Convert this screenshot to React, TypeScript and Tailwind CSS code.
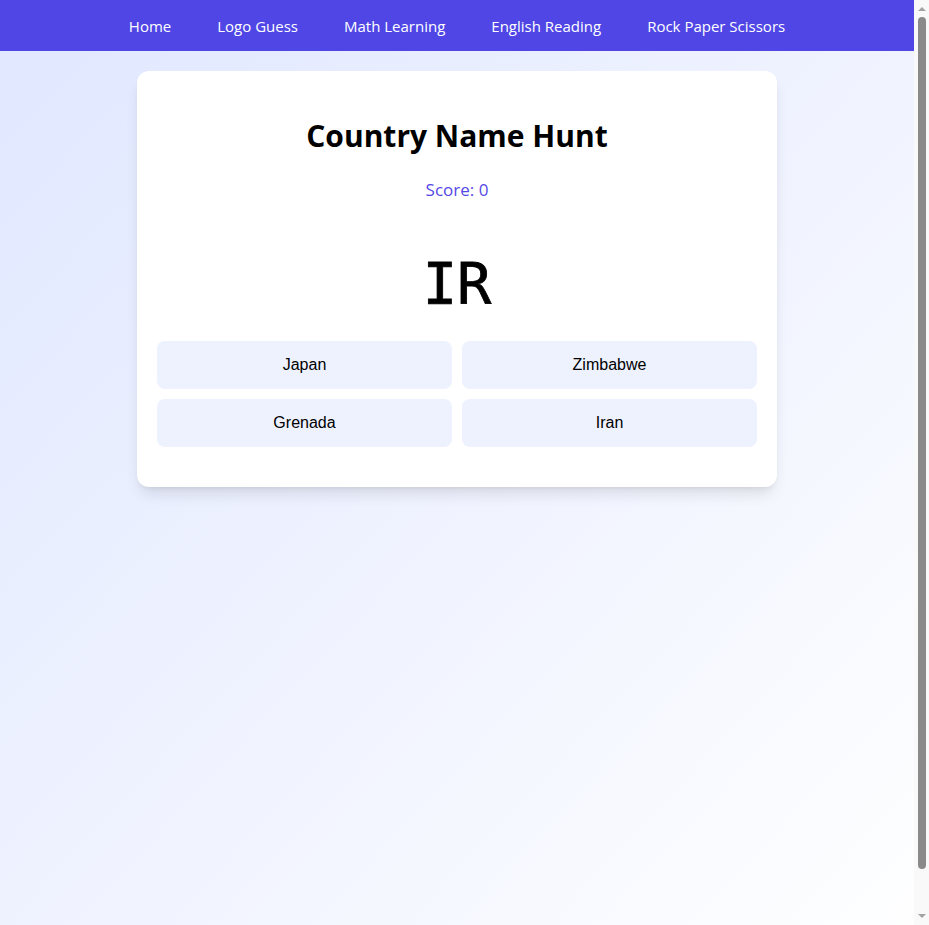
import React from "react";

export default function App() {
  const links = ["Home", "Logo Guess", "Math Learning", "English Reading", "Rock Paper Scissors"];
  const options = ["Japan", "Zimbabwe", "Grenada", "Iran"];
  return (
    <div className="flex h-screen overflow-hidden font-['Open_Sans',sans-serif]">
      <div className="w-[914px] shrink-0 h-[976px] bg-gradient-to-br from-[#e0e7ff] to-[#ffffff]">
        <nav className="h-[51px] bg-[#4f46e5] flex items-center justify-center gap-[46px] pt-[2px]">
          {links.map((l) => (
            <a key={l} href="#" className="text-white text-[15px] leading-none">
              {l}
            </a>
          ))}
        </nav>
        <main className="pt-5 flex justify-center items-start">
          <div className="w-[640px] bg-white rounded-xl shadow-lg px-5 pt-[45px] pb-[40px]">
            <h1 className="text-center text-[30px] leading-[40px] font-bold text-black">Country Name Hunt</h1>
            <p className="text-center text-[17px] leading-[28px] mt-[20px] text-[#5548e6]">Score: 0</p>
            <div className="text-center mt-[50px] text-[57px] leading-[60px] font-['DejaVu_Sans_Mono',monospace] text-black [-webkit-text-stroke:0.8px_black]">
              IR
            </div>
            <div className="grid grid-cols-2 gap-x-[10px] gap-y-[10px] mt-[27px]">
              {options.map((o) => (
                <button
                  key={o}
                  className="h-[48px] rounded-lg bg-[#eef2ff] text-[16px] text-black font-['Liberation_Sans',Arial,sans-serif]"
                >
                  {o}
                </button>
              ))}
            </div>
          </div>
        </main>
      </div>
      <div className="w-[15px] shrink-0 h-screen bg-[#f9f9f9] flex flex-col items-center">
        <div className="h-[17px] flex items-center justify-center">
          <div className="w-0 h-0 border-l-[4px] border-r-[4px] border-b-[4px] border-l-transparent border-r-transparent border-b-[#a3a3a3]" />
        </div>
        <div className="w-[8px] h-[852px] rounded-full bg-[#8a8a8a]" />
        <div className="flex-1 flex items-end justify-center pb-[7px]">
          <div className="w-0 h-0 border-l-[4px] border-r-[4px] border-t-[4px] border-l-transparent border-r-transparent border-t-[#a3a3a3]" />
        </div>
      </div>
    </div>
  );
}
